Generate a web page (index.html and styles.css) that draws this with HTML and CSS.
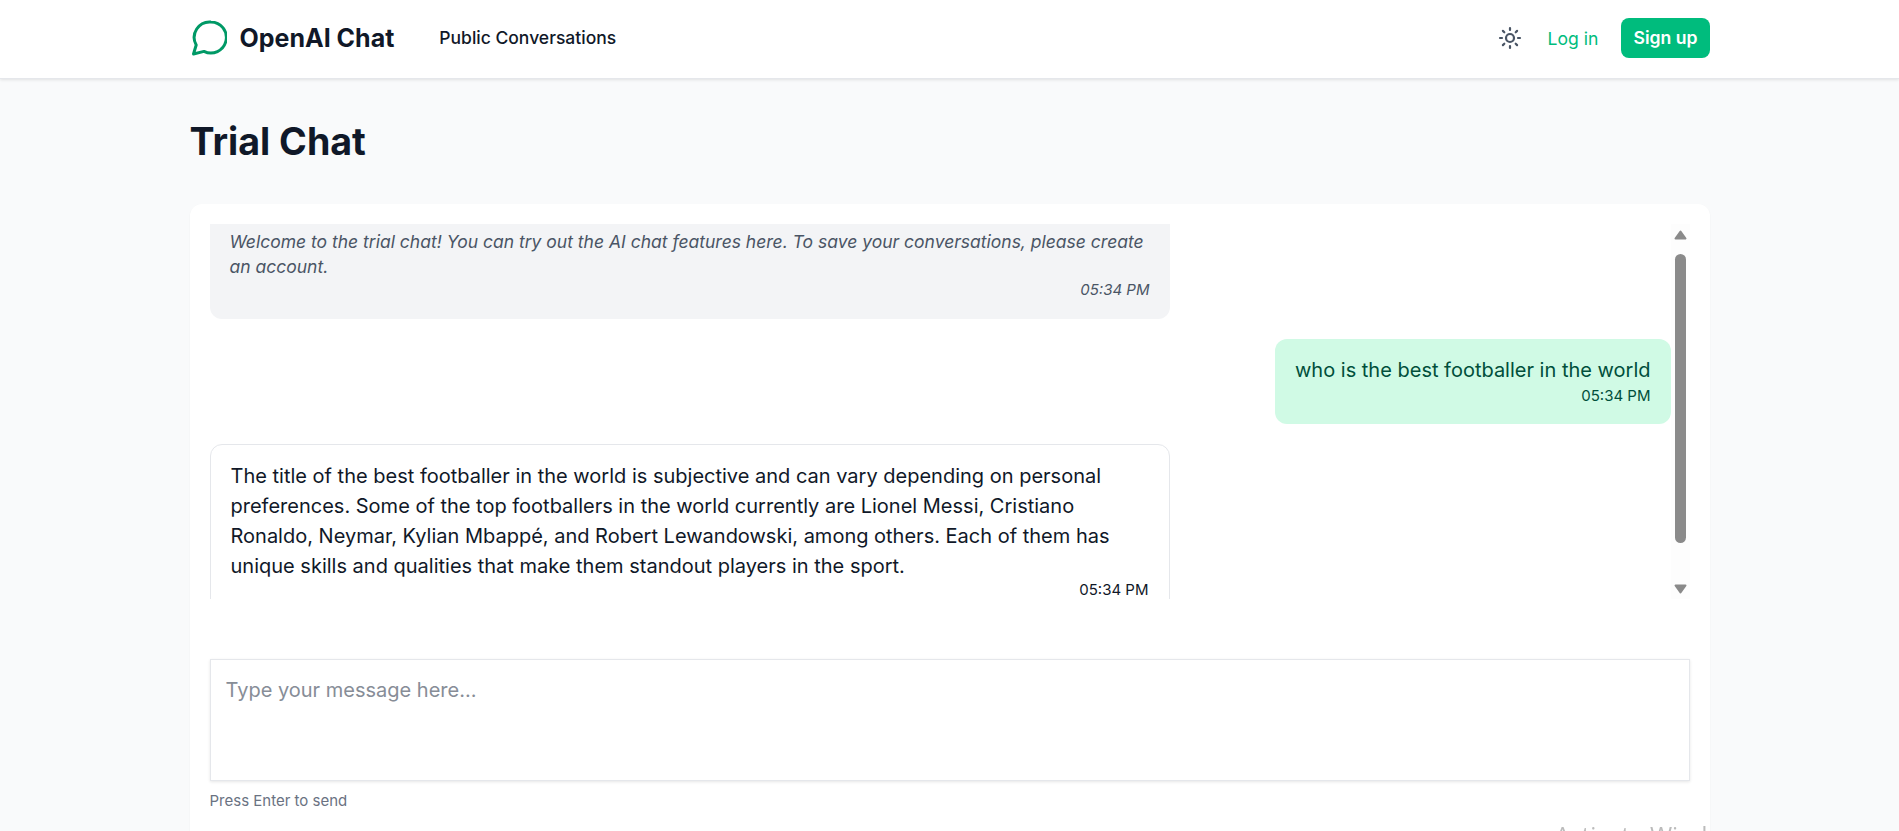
FILE: index.html
```html
<!DOCTYPE html>
<html lang="en">
<head>
<meta charset="utf-8">
<title>Trial Chat</title>
<link rel="stylesheet" href="styles.css">
</head>
<body>
<header class="topbar">
  <div class="topbar-inner">
    <a class="brand">
      <svg class="brand-icon" viewBox="0 0 36 36" width="36" height="36" fill="none" stroke="#009966" stroke-width="3" stroke-linejoin="round" stroke-linecap="round">
        <path d="M20 2a15.5 15.5 0 1 1-7 29.4L2.5 34l2.7-9A15.5 15.5 0 0 1 20 2z"/>
      </svg>
      <span class="brand-name">OpenAI Chat</span>
    </a>
    <a class="nav-link">Public Conversations</a>
    <div class="topbar-actions">
      <svg class="theme-icon" viewBox="0 0 24 24" width="24" height="24" fill="none" stroke="#4a5565" stroke-width="2.2" stroke-linecap="round">
        <circle cx="12" cy="12" r="4"/>
        <path d="M12 2v2M12 20v2M2 12h2M20 12h2M4.9 4.9l1.4 1.4M17.7 17.7l1.4 1.4M4.9 19.1l1.4-1.4M17.7 6.3l1.4-1.4"/>
      </svg>
      <a class="login">Log in</a>
      <a class="signup">Sign up</a>
    </div>
  </div>
</header>
<main class="page">
  <h1 class="title">Trial Chat</h1>
  <section class="card">
    <div class="chat">
      <div class="messages">
        <div class="msg msg-system">
          <p class="msg-text">Welcome to the trial chat! You can try out the AI chat features here. To save your conversations, please create an account.</p>
          <div class="msg-time">05:34 PM</div>
        </div>
        <div class="msg msg-user">
          <p class="msg-text">who is the best footballer in the world</p>
          <div class="msg-time">05:34 PM</div>
        </div>
        <div class="msg msg-ai">
          <p class="msg-text">The title of the best footballer in the world is subjective and can vary depending on personal preferences. Some of the top footballers in the world currently are Lionel Messi, Cristiano Ronaldo, Neymar, Kylian Mbappé, and Robert Lewandowski, among others. Each of them has unique skills and qualities that make them standout players in the sport.</p>
          <div class="msg-time">05:34 PM</div>
        </div>
      </div>
      <div class="scrollbar">
        <svg class="arrow-up" viewBox="0 0 13 10" width="13" height="10"><polygon points="6.5,1.5 11.5,8.5 1.5,8.5"/></svg>
        <div class="scroll-track"><div class="scroll-thumb"></div></div>
        <svg class="arrow-down" viewBox="0 0 13 10" width="13" height="10"><polygon points="1.5,1.5 11.5,1.5 6.5,8.5"/></svg>
      </div>
    </div>
    <textarea class="input" placeholder="Type your message here..."></textarea>
    <p class="hint">Press Enter to send</p>
  </section>
</main>
<div class="watermark">Activate Windows</div>
</body>
</html>
```
FILE: styles.css
```css
* { box-sizing: border-box; }
html, body { height: 100%; }
body {
  margin: 0;
  background: #f9fafb;
  font-family: Inter, "Liberation Sans", sans-serif;
  color: #101828;
  overflow: hidden;
}
.topbar {
  background: #fff;
  height: 79px;
  border-bottom: 1px solid #e5e7eb;
  box-shadow: 0 1px 3px rgba(0, 0, 0, 0.1);
}
.topbar-inner {
  width: 1520px;
  margin: 0 auto;
  height: 76px;
  display: flex;
  align-items: center;
}
.brand { display: flex; align-items: center; gap: 13px; }
.brand-icon { display: block; margin-left: 1px; }
.brand-name { font-size: 25px; font-weight: 700; }
.nav-link { margin-left: 45px; font-size: 17.5px; font-weight: 450; line-height: 24px; margin-bottom: 1px; }
.topbar-actions { margin-left: auto; display: flex; align-items: center; }
.theme-icon { display: block; }
.login { margin-left: 26px; font-size: 17.6px; font-weight: 400; color: #00bc7d; }
.signup {
  margin-left: 23px;
  background: #00bc7d;
  color: #fff;
  font-size: 17.6px;
  font-weight: 600;
  border-radius: 8px;
  padding: 0 12px;
  height: 40px;
  line-height: 40px;
}
.page { width: 1520px; margin: 0 auto; }
.title { margin: 0; padding-top: 43px; font-size: 37.6px; line-height: 40px; font-weight: 700; }
.card {
  margin-top: 42px;
  background: #fff;
  border-radius: 12px;
  box-shadow: 0 1px 2px rgba(0, 0, 0, 0.05);
  padding: 20px;
  height: 700px;
}
.chat { display: flex; height: 375px; overflow: hidden; }
.messages { flex: 1; min-width: 0; display: flex; flex-direction: column; gap: 20px; align-items: flex-start; }
.msg { width: 960px; border-radius: 12px; padding: 0 20px; flex: none; }
.msg-text { margin: 0; }
.msg-time { font-size: 15px; line-height: 22.5px; text-align: right; }
.msg-system {
  background: #f3f4f6;
  color: #4a5565;
  font-style: italic;
  font-size: 17.5px;
  line-height: 25px;
  padding-bottom: 17.5px;
  border-radius: 0 0 12px 12px;
}
.msg-system .msg-text { padding-top: 5px; }
.msg-user {
  align-self: flex-end;
  width: auto;
  background: #d0fae5;
  color: #004f3b;
  font-size: 20px;
  line-height: 30px;
  padding: 16px 20px 16.5px;
}
.msg-ai {
  background: #fff;
  border: 1px solid #e5e7eb;
  color: #101828;
  font-size: 20px;
  line-height: 30px;
  padding: 16px 20px;
}
.msg-ai .msg-time { line-height: 18px; }
.scrollbar {
  flex: none;
  width: 19px;
  background: #fdfdfd;
  display: flex;
  flex-direction: column;
  align-items: center;
}
.arrow-up, .arrow-down { display: block; flex: none; fill: #8a8a8a; stroke: #8a8a8a; stroke-width: 2; stroke-linejoin: round; }
.arrow-up { margin-top: 6px; }
.arrow-down { margin-bottom: 5px; }
.scroll-track { flex: 1; width: 11px; padding-top: 14px; }
.scroll-thumb { width: 11px; height: 289px; background: #8a8a8a; border-radius: 6px; }
.input {
  display: block;
  width: 100%;
  height: 122px;
  margin-top: 60px;
  border: 1px solid #e5e7eb;
  border-radius: 0;
  box-shadow: 0 1px 3px rgba(0, 0, 0, 0.1);
  padding: 16px 15px;
  font-family: inherit;
  font-size: 20px;
  line-height: 28px;
  resize: none;
  outline: none;
}
.input::placeholder { color: #878d97; }
.hint { margin: 9px 0 0; font-size: 15px; line-height: 22.5px; color: #6a7282; }
.watermark {
  position: fixed;
  left: 1555px;
  top: 818px;
  font-family: "Open Sans", sans-serif;
  font-size: 24px;
  color: rgba(120, 120, 120, 0.5);
  white-space: nowrap;
}
```
